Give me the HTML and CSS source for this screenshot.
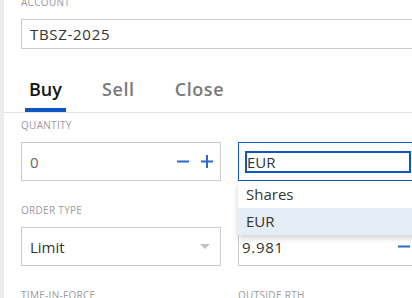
FILE: index.html
```html
<!DOCTYPE html>
<html lang="en">
<head>
    <meta charset="UTF-8">
    <meta name="viewport" content="width=device-width, initial-scale=1.0">
    <title>Order Ticket</title>
    <link rel="stylesheet" href="styles.css">
</head>
<body>
    <div class="panel">
        <div class="field">
            <div class="label">Account</div>
            <div class="box account"><span class="num">TBSZ-2025</span></div>
        </div>

        <div class="tabs">
            <div class="tab active">Buy</div>
            <div class="tab">Sell</div>
            <div class="tab">Close</div>
        </div>

        <div class="grid">
            <div class="field">
                <div class="label">Quantity</div>
                <div class="box">
                    <span class="value muted">0</span>
                    <span class="steppers">
                        <svg width="12" height="13" viewBox="0 0 12 13"><rect x="0" y="5.5" width="12" height="2" fill="#2b6bcb"/></svg>
                        <svg width="12" height="13" viewBox="0 0 12 13"><rect x="0" y="5.5" width="12" height="2" fill="#2b6bcb"/><rect x="5" y="0" width="2" height="13" fill="#2b6bcb"/></svg>
                    </span>
                </div>
            </div>
            <div class="field">
                <div class="label">&nbsp;</div>
                <div class="box focused">
                    <div class="inner">EUR</div>
                    <div class="menu">
                        <div class="item">Shares</div>
                        <div class="item selected">EUR</div>
                    </div>
                </div>
            </div>

            <div class="field">
                <div class="label">Order type</div>
                <div class="box">
                    <span class="value">Limit</span>
                    <span class="caret"></span>
                </div>
            </div>
            <div class="field">
                <div class="label">&nbsp;</div>
                <div class="box price">
                    <span class="value num">9.981</span>
                    <span class="steppers">
                        <svg width="12" height="13" viewBox="0 0 12 13"><rect x="0" y="5.5" width="12" height="2" fill="#2b6bcb"/></svg>
                        <svg width="12" height="13" viewBox="0 0 12 13"><rect x="0" y="5.5" width="12" height="2" fill="#2b6bcb"/><rect x="5" y="0" width="2" height="13" fill="#2b6bcb"/></svg>
                    </span>
                </div>
            </div>

            <div class="field">
                <div class="label">Time-in-force</div>
                <div class="box"></div>
            </div>
            <div class="field">
                <div class="label">Outside RTH</div>
                <div class="box"></div>
            </div>
        </div>
    </div>
</body>
</html>
```

FILE: styles.css
```css
body {
    margin: 0;
    font-family: "Open Sans", "Liberation Sans", sans-serif;
    background: #fff;
    overflow: hidden;
    width: 412px;
    height: 298px;
}
.panel {
    border-left: 4px solid #ececec;
    padding-left: 17px;
    margin-top: -4px;
    width: 460px;
    min-height: 320px;
}
.label {
    font-size: 10px;
    line-height: 12px;
    color: #9a9a9a;
    text-transform: uppercase;
    letter-spacing: 0.3px;
    margin-bottom: 11px;
}
.box {
    position: relative;
    box-sizing: border-box;
    height: 39px;
    border: 1px solid #cccccc;
    display: flex;
    align-items: center;
    justify-content: space-between;
    padding: 0 7px 0 8px;
    font-size: 15px;
    color: #333;
}
.account {
    height: 30px;
    width: 421px;
    color: #333;
}
.num {
    letter-spacing: 0.7px;
}
.value {
    color: #333;
}
.value.muted {
    color: #666;
}
.price {
    padding-left: 3px;
}
.steppers {
    display: flex;
    gap: 12px;
}
.steppers svg {
    display: block;
}
.caret {
    width: 0;
    height: 0;
    border-left: 5px solid transparent;
    border-right: 5px solid transparent;
    border-top: 5px solid #c2c2c2;
    margin-right: 3px;
}
.tabs {
    display: flex;
    gap: 32px;
    margin: 29px 0 0 -17px;
    padding-left: 21px;
    border-bottom: 1px solid #e4e4e4;
}
.tab {
    font-size: 18px;
    line-height: 22px;
    font-weight: 600;
    color: #7a7a7a;
    letter-spacing: 0.6px;
    padding: 0 4px 8px;
    border-bottom: 4px solid transparent;
}
.tab.active {
    color: #151515;
    letter-spacing: 0;
    border-bottom-color: #0e56c2;
}
.grid {
    display: grid;
    grid-template-columns: 200px 204px;
    column-gap: 17px;
    row-gap: 23px;
    margin-top: 6px;
}
.focused {
    border-color: #0e56c2;
    padding: 0 0 0 6px;
    justify-content: flex-start;
}
.inner {
    box-sizing: border-box;
    width: 166px;
    height: 22px;
    border: 2px solid #0e56c2;
    line-height: 18px;
    color: #333;
}
.menu {
    position: absolute;
    top: 100%;
    left: -1px;
    right: -1px;
    margin-top: 1px;
    background: #fff;
    box-shadow: 0 3px 6px rgba(0, 0, 0, 0.18);
    z-index: 2;
}
.item {
    height: 27px;
    line-height: 27px;
    padding-left: 8px;
    color: #333;
}
.item.selected {
    background: #e5edf6;
}
```
